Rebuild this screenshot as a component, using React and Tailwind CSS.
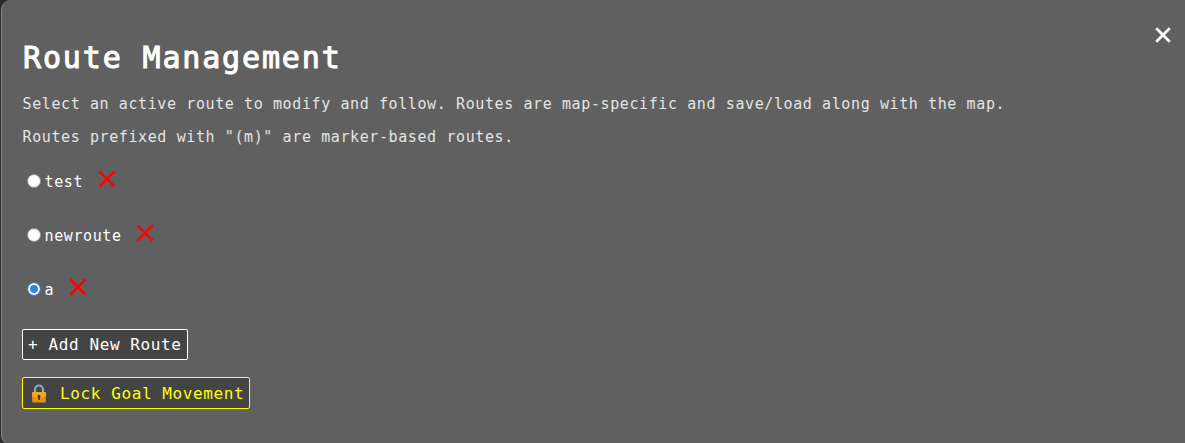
import { useState } from 'react';

const initialRoutes = ['test', 'newroute', 'a'];

function Cross({ className, width }) {
  return (
    <svg viewBox="0 0 18 18" className={className} fill="none" stroke="currentColor" strokeWidth={width}>
      <path d="M1.4 1.4L16.6 16.6M16.6 1.4L1.4 16.6" />
    </svg>
  );
}

function Lock() {
  return (
    <svg viewBox="0 0 14 19" className="ml-[4px] mr-[14px] h-[19px] w-[14px] shrink-0">
      <path d="M3 9V5.5a4 4 0 0 1 8 0V9" fill="none" stroke="#82aec0" strokeWidth="2.2" />
      <rect x="0.2" y="8" width="13.6" height="10.6" rx="1" fill="#e09612" />
      <rect x="0.2" y="8" width="13.6" height="5" rx="1" fill="#f2ab1c" />
      <path d="M7 10.8a1.5 1.5 0 0 1 .8 2.8V16H6.2v-2.4A1.5 1.5 0 0 1 7 10.8z" fill="#4e342e" />
    </svg>
  );
}

function RouteRow({ name, checked, onSelect, onRemove }) {
  return (
    <li className="flex h-[54px] items-start">
      <label className="flex h-6 items-center">
        <input
          type="radio"
          name="route"
          checked={checked}
          onChange={onSelect}
          className="ml-[5px] mr-[3px] mt-[-1px] h-[14px] w-[14px] appearance-none rounded-full border border-[#8f8f9d] bg-white checked:border-[#3584e4] checked:bg-[#3584e4] checked:shadow-[inset_0_0_0_2px_white]"
        />
        <span className="whitespace-pre pl-[0.5px] pt-[2px] text-[15px] leading-6">{name}</span>
      </label>
      <button aria-label={`Delete ${name}`} onClick={onRemove} className="ml-[14.8px] mt-px text-[#ff0000]">
        <Cross className="h-[18px] w-[18px]" width={2.7} />
      </button>
    </li>
  );
}

export default function App() {
  const [routes, setRoutes] = useState(initialRoutes);
  const [active, setActive] = useState('a');
  return (
    <div className="h-[443px] w-full overflow-hidden bg-[#2b2b2d] pl-px font-['DejaVu_Sans_Mono',monospace] tracking-[0.603px] text-white">
      <main className="h-[445px] rounded-l-[10px] border-l border-[#8c8c8c] bg-[#606060] pl-[20px]">
        <header className="flex h-[87px] items-start justify-between pr-[14px]">
          <h1 className="mt-[36px] pl-px text-[30px] font-normal leading-[44px] tracking-[1.85px] [-webkit-text-stroke:1px_white]">
            Route Management
          </h1>
          <button aria-label="Close" className="mt-[27px]">
            <Cross className="h-[16px] w-[16px]" width={3.1} />
          </button>
        </header>
        <p className="whitespace-pre pl-[0.5px] pt-px text-[15px] leading-[33px] text-[#e4e4e4]">
          {'Select an active route to modify and follow. Routes are map-specific and save/load along with the map.\nRoutes prefixed with "(m)" are marker-based routes.'}
        </p>
        <ul className="mt-[15px] h-[160px]">
          {routes.map((name) => (
            <RouteRow
              key={name}
              name={name}
              checked={active === name}
              onSelect={() => setActive(name)}
              onRemove={() => setRoutes(routes.filter((r) => r !== name))}
            />
          ))}
        </ul>
        <div className="flex flex-col items-start gap-[17px]">
          <button className="h-[31px] w-[166px] whitespace-pre rounded-[2px] border border-white bg-[#444] pl-[5px] text-left text-[16px]">
            + Add New Route
          </button>
          <button className="flex h-[32px] w-[228px] items-center whitespace-pre rounded-[2px] border border-[#ff0] bg-[#444] pl-[5px] text-[16px] text-[#ff0]">
            <Lock />
            <span className="pt-[2px]">Lock Goal Movement</span>
          </button>
        </div>
      </main>
    </div>
  );
}
